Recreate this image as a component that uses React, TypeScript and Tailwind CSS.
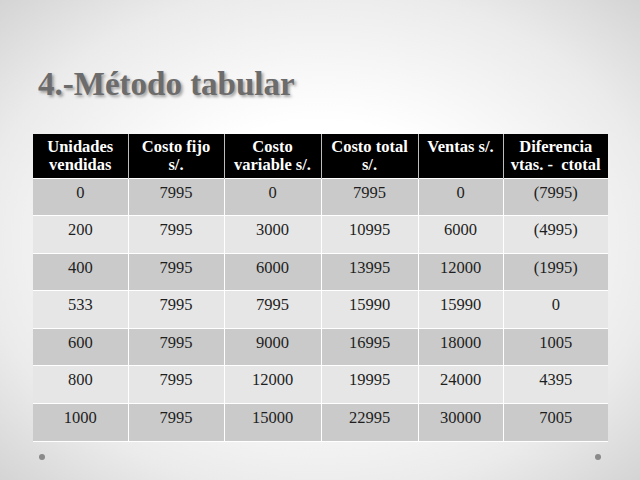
import React from "react";

const HEADERS = [
  ["Unidades", "vendidas"],
  ["Costo fijo", "s/."],
  ["Costo", "variable s/."],
  ["Costo total", "s/."],
  ["Ventas s/."],
  ["Diferencia", "vtas. -  ctotal"],
];

const COL_W = ["w-[95px]", "w-[96px]", "w-[97px]", "w-[97px]", "w-[85px]", "w-[105px]"];

const ROWS = [
  ["0", "7995", "0", "7995", "0", "(7995)"],
  ["200", "7995", "3000", "10995", "6000", "(4995)"],
  ["400", "7995", "6000", "13995", "12000", "(1995)"],
  ["533", "7995", "7995", "15990", "15990", "0"],
  ["600", "7995", "9000", "16995", "18000", "1005"],
  ["800", "7995", "12000", "19995", "24000", "4395"],
  ["1000", "7995", "15000", "22995", "30000", "7005"],
];

export default function App() {
  return (
    <div className="w-[640px] h-[480px] flex flex-col bg-[radial-gradient(ellipse_at_center,#ffffff_35%,#ebebeb_75%,#d4d4d4_100%)] font-[family-name:'Liberation_Serif',serif] overflow-hidden">
      {/* Title */}
      <h1 className="pl-[38px] pt-[64px] h-[134px] text-[33px] leading-[40px] font-bold text-[#6c6c6c] [text-shadow:2px_2px_3px_rgba(0,0,0,0.35)]">
        4.-Método tabular
      </h1>

      {/* Table */}
      <div className="pl-[33px]">
        <table className="border-collapse table-fixed w-[575px] font-[family-name:'Liberation_Serif',serif] text-[16px]">
          <thead>
            <tr className="bg-black h-[44px]">
              {HEADERS.map((h, i) => (
                <th
                  key={i}
                  className={`${COL_W[i]} border-l border-[#bdbdbd] first:border-l-0 font-[family-name:'Liberation_Serif',serif] text-white font-bold text-[16.5px] leading-[18px] align-top pt-[4px] text-center`}
                >
                  {h.map((line, j) => (
                    <div key={j} className="whitespace-pre">{line}</div>
                  ))}
                </th>
              ))}
            </tr>
          </thead>
          <tbody>
            {ROWS.map((row, r) => (
              <tr
                key={r}
                className={`h-[37.6px] ${r % 2 === 0 ? "bg-[#cacaca]" : "bg-[#e6e6e6]"}`}
              >
                {row.map((cell, c) => (
                  <td
                    key={c}
                    className="border border-white first:border-l-0 last:border-r-0 text-center align-top pt-[5px] font-[family-name:'Liberation_Serif',serif] text-[16.5px] leading-[18px] text-[#1e1e1e]"
                  >
                    {cell}
                  </td>
                ))}
              </tr>
            ))}
          </tbody>
        </table>
      </div>

      {/* Bottom dots */}
      <div className="flex justify-between px-[39px] pt-[12px]">
        <span className="w-[6px] h-[6px] rounded-full bg-[#8a8a8a]" />
        <span className="w-[6px] h-[6px] rounded-full bg-[#8a8a8a]" />
      </div>
    </div>
  );
}
